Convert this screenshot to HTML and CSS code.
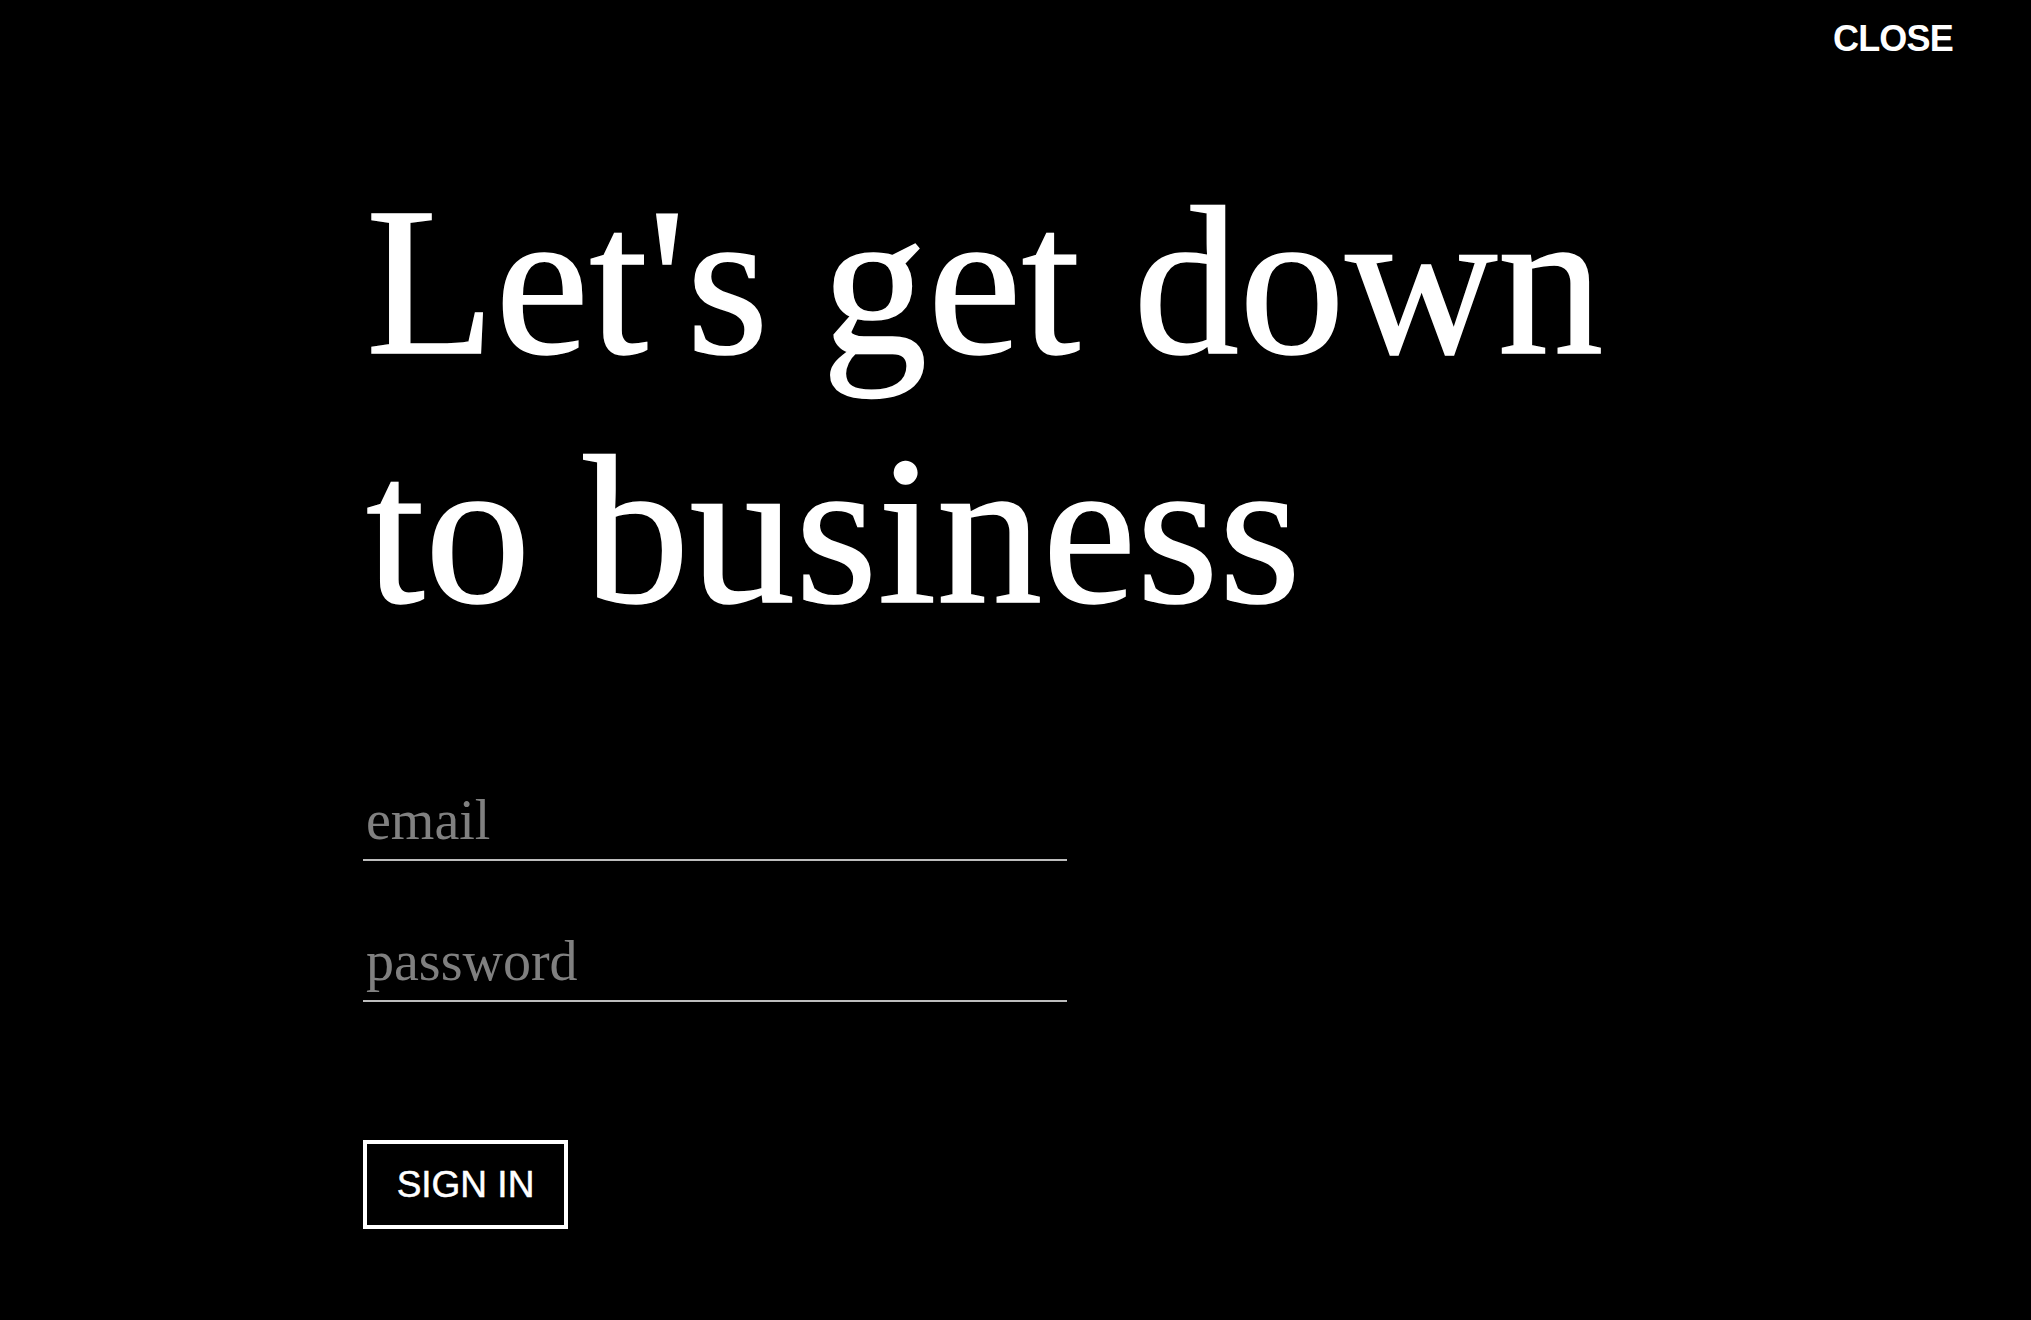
FILE: index.html
```html
<!DOCTYPE html>
<html lang="en">
<head>
<meta charset="utf-8">
<title>Sign in</title>
<link rel="stylesheet" href="styles.css">
</head>
<body>
<div class="page">
  <header class="topbar">
    <a class="close" href="#">CLOSE</a>
  </header>
  <main class="login">
    <h1 class="headline">Let's get down<br>to business</h1>
    <form class="form">
      <input class="field field-email" type="email" placeholder="email">
      <input class="field field-password" type="password" placeholder="password">
      <button class="signin" type="button">SIGN IN</button>
    </form>
  </main>
</div>
</body>
</html>
```

FILE: styles.css
```css
html, body {
  margin: 0;
  padding: 0;
  background: #000;
}

.page {
  width: 2031px;
  height: 1320px;
  background: #000;
  color: #fff;
  overflow: hidden;
}

.topbar {
  display: flex;
  justify-content: flex-end;
  height: 36px;
  padding: 21px 78px 0 0;
}

.close {
  font-family: "Liberation Sans", Arial, sans-serif;
  font-weight: 700;
  font-size: 36px;
  line-height: 36px;
  letter-spacing: -0.8px;
  color: #fff;
  text-decoration: none;
}

.login {
  padding: 101px 0 0 363px;
}

.headline {
  margin: 0;
  padding-left: 3px;
  font-family: "Liberation Serif", "Times New Roman", serif;
  font-weight: 400;
  font-size: 211px;
  line-height: 249px;
  letter-spacing: 0.3px;
  color: #fff;
  -webkit-text-stroke: 1.5px #fff;
}

.form {
  display: flex;
  flex-direction: column;
  align-items: flex-start;
  margin: 131px 0 0 0;
}

.field {
  box-sizing: content-box;
  width: 701px;
  height: 66px;
  line-height: 66px;
  padding: 0 0 6px 3px;
  margin: 0;
  border: none;
  border-bottom: 2px solid #bdbdbd;
  background: transparent;
  color: #fff;
  font-family: "Liberation Serif", "Times New Roman", serif;
  font-size: 56px;
  outline: none;
}

.field::placeholder {
  color: #808080;
  opacity: 1;
}

.field-password {
  margin-top: 67px;
}

.signin {
  box-sizing: border-box;
  width: 205px;
  height: 89px;
  margin-top: 138px;
  padding: 0;
  border: 4px solid #fff;
  background: transparent;
  color: #fff;
  font-family: "Liberation Sans", Arial, sans-serif;
  font-size: 37px;
  -webkit-text-stroke: 0.5px #fff;
  cursor: pointer;
}
```
